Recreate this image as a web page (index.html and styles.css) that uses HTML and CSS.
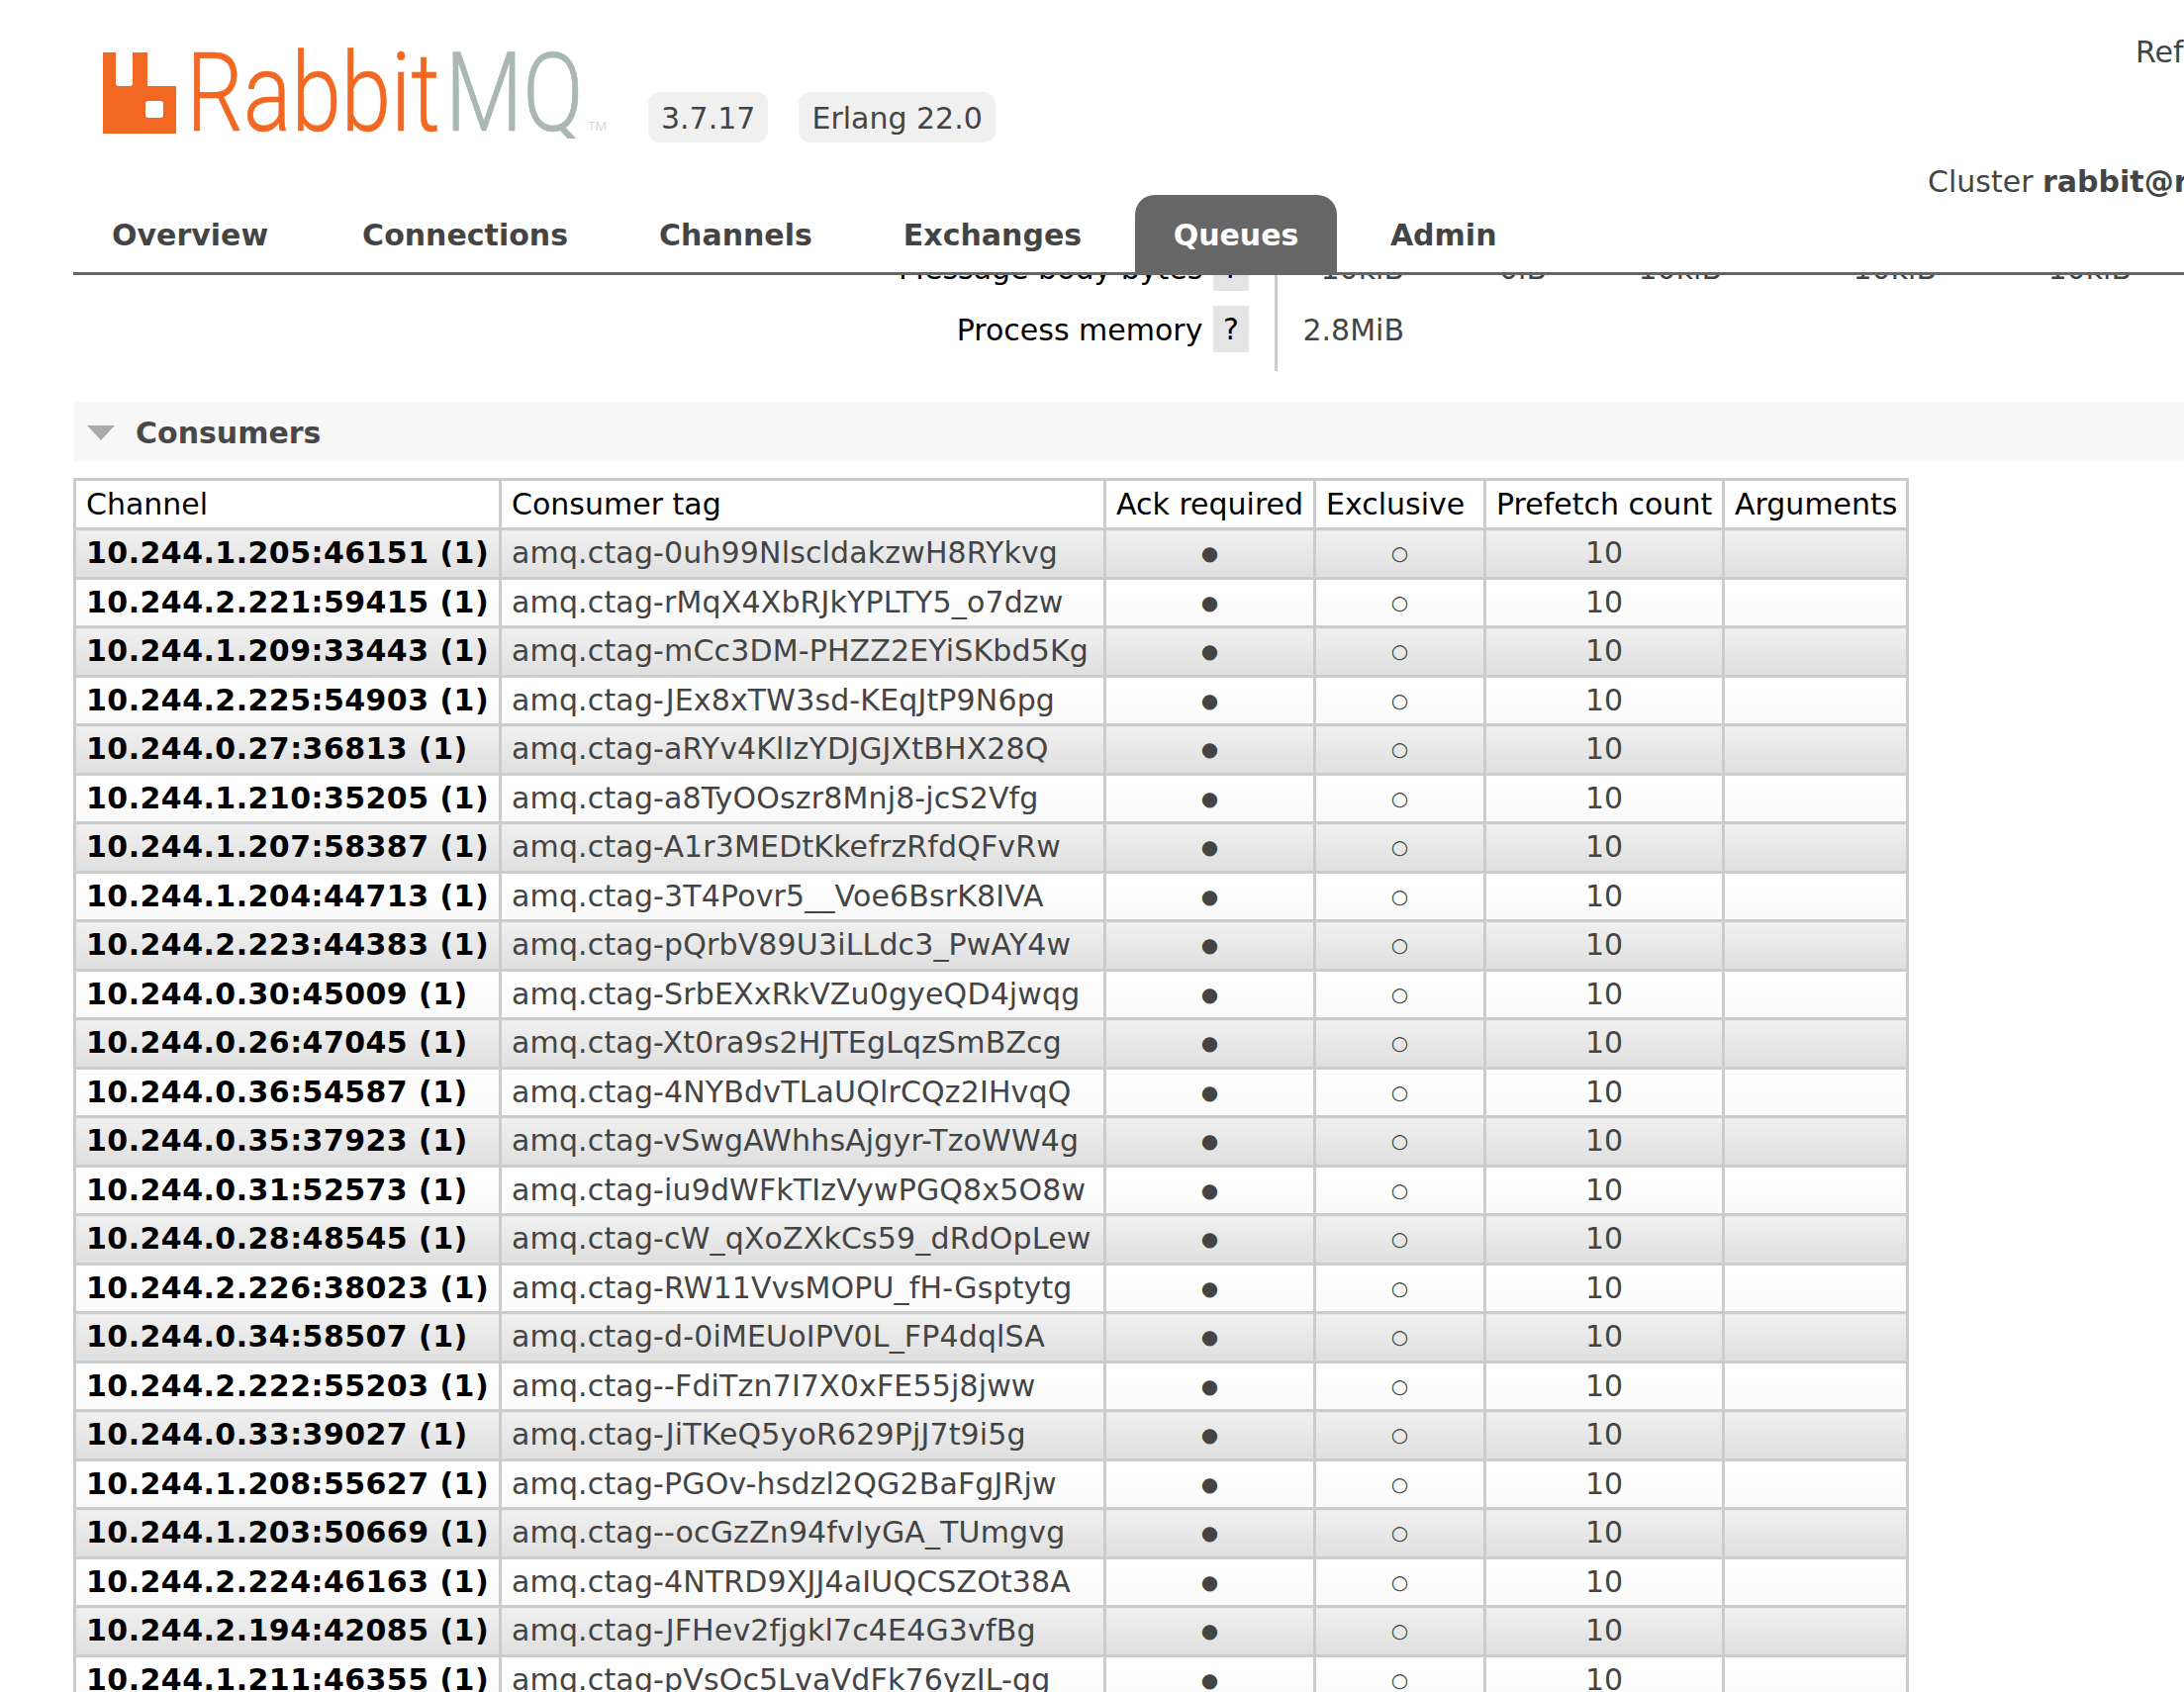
FILE: index.html
```html
<!DOCTYPE html>
<html lang="en">
<head>
    <meta charset="UTF-8">
    <meta name="viewport" content="width=device-width, initial-scale=1.0">
    <title>RabbitMQ Management</title>
    <link rel="stylesheet" href="styles.css">
</head>
<body>
    <div class="header">
        <div class="brand">
            <svg class="logo" width="510" height="140" viewBox="0 -50 510 140" aria-label="RabbitMQ">
                <path class="logo-mark" d="M0 3H13V34Q13 37 16 37H27Q30 37 30 34V3H45V37H74V85H0ZM46 52Q43 52 43 55V66Q43 69 46 69H58Q61 69 61 66V55Q61 52 58 52Z" fill-rule="evenodd"/>
                <text class="logo-orange" transform="scale(.81 1)" x="104" y="82">Rabbit</text>
                <text class="logo-grey" transform="scale(.81 1)" x="427" y="82">MQ</text>
                <text class="logo-tm" x="490" y="82">TM</text>
            </svg>
            <span class="badge">3.7.17</span>
            <span class="badge">Erlang 22.0</span>
        </div>
        <p class="refresh">Ref</p>
        <p class="cluster">Cluster <b>rabbit@r</b></p>
        <ul class="tabs">
            <li class="tab tab-overview">Overview</li>
            <li class="tab tab-connections">Connections</li>
            <li class="tab tab-channels">Channels</li>
            <li class="tab tab-exchanges">Exchanges</li>
            <li class="tab selected">Queues</li>
            <li class="tab tab-admin">Admin</li>
        </ul>
    </div>

    <div class="main">
        <div class="stats">
            <div class="stat-row">
                <div class="stat-name">Message body bytes <span class="help">?</span></div>
                <div class="stat-values">
                    <span>10kiB</span>
                    <span>0iB</span>
                    <span>10kiB</span>
                    <span>10kiB</span>
                    <span>10kiB</span>
                </div>
            </div>
            <div class="stat-row">
                <div class="stat-name">Process memory <span class="help">?</span></div>
                <div class="stat-values">
                    <span>2.8MiB</span>
                </div>
            </div>
        </div>

        <h2 class="section-title"><span class="arrow"></span>Consumers</h2>

        <table class="list">
            <colgroup>
                <col class="col-channel">
                <col class="col-tag">
                <col class="col-ack">
                <col class="col-excl">
                <col class="col-prefetch">
                <col class="col-args">
            </colgroup>
            <thead>
                <tr>
                    <th>Channel</th>
                    <th>Consumer tag</th>
                    <th>Ack required</th>
                    <th>Exclusive</th>
                    <th>Prefetch count</th>
                    <th>Arguments</th>
                </tr>
            </thead>
            <tbody>
                <tr class="alt1"><td class="channel">10.244.1.205:46151 (1)</td><td class="tag">amq.ctag-0uh99NlscldakzwH8RYkvg</td><td class="c"><span class="yes">●</span></td><td class="c"><span class="no">○</span></td><td class="c">10</td><td></td></tr>
                <tr class="alt2"><td class="channel">10.244.2.221:59415 (1)</td><td class="tag">amq.ctag-rMqX4XbRJkYPLTY5_o7dzw</td><td class="c"><span class="yes">●</span></td><td class="c"><span class="no">○</span></td><td class="c">10</td><td></td></tr>
                <tr class="alt1"><td class="channel">10.244.1.209:33443 (1)</td><td class="tag">amq.ctag-mCc3DM-PHZZ2EYiSKbd5Kg</td><td class="c"><span class="yes">●</span></td><td class="c"><span class="no">○</span></td><td class="c">10</td><td></td></tr>
                <tr class="alt2"><td class="channel">10.244.2.225:54903 (1)</td><td class="tag">amq.ctag-JEx8xTW3sd-KEqJtP9N6pg</td><td class="c"><span class="yes">●</span></td><td class="c"><span class="no">○</span></td><td class="c">10</td><td></td></tr>
                <tr class="alt1"><td class="channel">10.244.0.27:36813 (1)</td><td class="tag">amq.ctag-aRYv4KlIzYDJGJXtBHX28Q</td><td class="c"><span class="yes">●</span></td><td class="c"><span class="no">○</span></td><td class="c">10</td><td></td></tr>
                <tr class="alt2"><td class="channel">10.244.1.210:35205 (1)</td><td class="tag">amq.ctag-a8TyOOszr8Mnj8-jcS2Vfg</td><td class="c"><span class="yes">●</span></td><td class="c"><span class="no">○</span></td><td class="c">10</td><td></td></tr>
                <tr class="alt1"><td class="channel">10.244.1.207:58387 (1)</td><td class="tag">amq.ctag-A1r3MEDtKkefrzRfdQFvRw</td><td class="c"><span class="yes">●</span></td><td class="c"><span class="no">○</span></td><td class="c">10</td><td></td></tr>
                <tr class="alt2"><td class="channel">10.244.1.204:44713 (1)</td><td class="tag">amq.ctag-3T4Povr5__Voe6BsrK8IVA</td><td class="c"><span class="yes">●</span></td><td class="c"><span class="no">○</span></td><td class="c">10</td><td></td></tr>
                <tr class="alt1"><td class="channel">10.244.2.223:44383 (1)</td><td class="tag">amq.ctag-pQrbV89U3iLLdc3_PwAY4w</td><td class="c"><span class="yes">●</span></td><td class="c"><span class="no">○</span></td><td class="c">10</td><td></td></tr>
                <tr class="alt2"><td class="channel">10.244.0.30:45009 (1)</td><td class="tag">amq.ctag-SrbEXxRkVZu0gyeQD4jwqg</td><td class="c"><span class="yes">●</span></td><td class="c"><span class="no">○</span></td><td class="c">10</td><td></td></tr>
                <tr class="alt1"><td class="channel">10.244.0.26:47045 (1)</td><td class="tag">amq.ctag-Xt0ra9s2HJTEgLqzSmBZcg</td><td class="c"><span class="yes">●</span></td><td class="c"><span class="no">○</span></td><td class="c">10</td><td></td></tr>
                <tr class="alt2"><td class="channel">10.244.0.36:54587 (1)</td><td class="tag">amq.ctag-4NYBdvTLaUQlrCQz2IHvqQ</td><td class="c"><span class="yes">●</span></td><td class="c"><span class="no">○</span></td><td class="c">10</td><td></td></tr>
                <tr class="alt1"><td class="channel">10.244.0.35:37923 (1)</td><td class="tag">amq.ctag-vSwgAWhhsAjgyr-TzoWW4g</td><td class="c"><span class="yes">●</span></td><td class="c"><span class="no">○</span></td><td class="c">10</td><td></td></tr>
                <tr class="alt2"><td class="channel">10.244.0.31:52573 (1)</td><td class="tag">amq.ctag-iu9dWFkTIzVywPGQ8x5O8w</td><td class="c"><span class="yes">●</span></td><td class="c"><span class="no">○</span></td><td class="c">10</td><td></td></tr>
                <tr class="alt1"><td class="channel">10.244.0.28:48545 (1)</td><td class="tag">amq.ctag-cW_qXoZXkCs59_dRdOpLew</td><td class="c"><span class="yes">●</span></td><td class="c"><span class="no">○</span></td><td class="c">10</td><td></td></tr>
                <tr class="alt2"><td class="channel">10.244.2.226:38023 (1)</td><td class="tag">amq.ctag-RW11VvsMOPU_fH-Gsptytg</td><td class="c"><span class="yes">●</span></td><td class="c"><span class="no">○</span></td><td class="c">10</td><td></td></tr>
                <tr class="alt1"><td class="channel">10.244.0.34:58507 (1)</td><td class="tag">amq.ctag-d-0iMEUoIPV0L_FP4dqlSA</td><td class="c"><span class="yes">●</span></td><td class="c"><span class="no">○</span></td><td class="c">10</td><td></td></tr>
                <tr class="alt2"><td class="channel">10.244.2.222:55203 (1)</td><td class="tag">amq.ctag--FdiTzn7I7X0xFE55j8jww</td><td class="c"><span class="yes">●</span></td><td class="c"><span class="no">○</span></td><td class="c">10</td><td></td></tr>
                <tr class="alt1"><td class="channel">10.244.0.33:39027 (1)</td><td class="tag">amq.ctag-JiTKeQ5yoR629PjJ7t9i5g</td><td class="c"><span class="yes">●</span></td><td class="c"><span class="no">○</span></td><td class="c">10</td><td></td></tr>
                <tr class="alt2"><td class="channel">10.244.1.208:55627 (1)</td><td class="tag">amq.ctag-PGOv-hsdzl2QG2BaFgJRjw</td><td class="c"><span class="yes">●</span></td><td class="c"><span class="no">○</span></td><td class="c">10</td><td></td></tr>
                <tr class="alt1"><td class="channel">10.244.1.203:50669 (1)</td><td class="tag">amq.ctag--ocGzZn94fvIyGA_TUmgvg</td><td class="c"><span class="yes">●</span></td><td class="c"><span class="no">○</span></td><td class="c">10</td><td></td></tr>
                <tr class="alt2"><td class="channel">10.244.2.224:46163 (1)</td><td class="tag">amq.ctag-4NTRD9XJJ4aIUQCSZOt38A</td><td class="c"><span class="yes">●</span></td><td class="c"><span class="no">○</span></td><td class="c">10</td><td></td></tr>
                <tr class="alt1"><td class="channel">10.244.2.194:42085 (1)</td><td class="tag">amq.ctag-JFHev2fjgkl7c4E4G3vfBg</td><td class="c"><span class="yes">●</span></td><td class="c"><span class="no">○</span></td><td class="c">10</td><td></td></tr>
                <tr class="alt2"><td class="channel">10.244.1.211:46355 (1)</td><td class="tag">amq.ctag-pVsOc5LvaVdFk76yzIL-gg</td><td class="c"><span class="yes">●</span></td><td class="c"><span class="no">○</span></td><td class="c">10</td><td></td></tr>
            </tbody>
        </table>
    </div>
</body>
</html>
```

FILE: styles.css
```css
html, body {
    margin: 0;
    padding: 0;
    height: 1710px;
    overflow: hidden;
    background: #fff;
}

body {
    font-family: "DejaVu Sans", Verdana, sans-serif;
    font-size: 30px;
    color: #444;
}

/* header stays on top of the scrolled content */
.header {
    position: relative;
    z-index: 2;
    height: 275px;
    margin-left: 74px;
    background: #fff;
    border-bottom: 3px solid #666;
}

.brand {
    display: flex;
    align-items: flex-start;
    padding-left: 30px;
}

.logo {
    flex: none;
    margin-right: 41px;
}

.logo-mark {
    fill: #f26822;
}

.logo text {
    font-family: Roboto, sans-serif;
    font-weight: 300;
    font-size: 112px;
    stroke-width: 0.7px;
}

.logo .logo-orange {
    fill: #f26822;
    stroke: #f26822;
}

.logo .logo-grey {
    fill: #a9b8b1;
    stroke: #a9b8b1;
}

.logo .logo-tm {
    font-size: 13px;
    fill: #c5cfca;
    stroke: none;
}

.badge {
    margin-top: 93px;
    margin-right: 31px;
    padding: 0 13px;
    height: 51px;
    line-height: 53px;
    background: #f0f0f0;
    border-radius: 12px;
}

.refresh,
.cluster {
    position: absolute;
    margin: 0;
    white-space: nowrap;
}

.refresh {
    top: 35px;
    left: 2084px;
}

.cluster {
    top: 166px;
    left: 1874px;
}

.tabs {
    position: absolute;
    left: 0;
    bottom: -3px;
    display: flex;
    margin: 0;
    padding: 0;
    list-style: none;
    font-weight: bold;
}

.tab {
    height: 81px;
    line-height: 82px;
    white-space: nowrap;
}

.tab-overview { margin-left: 39px; }
.tab-connections { margin-left: 95px; }
.tab-channels { margin-left: 92px; }
.tab-exchanges { margin-left: 92px; }
.tab-admin { margin-left: 54px; }

.tab.selected {
    margin-left: 54px;
    padding: 0 38.5px;
    background: #666;
    color: #fff;
    border-radius: 20px 20px 0 0;
}

/* main content, pulled up under the header */
.main {
    margin-top: -38px;
    margin-left: 74px;
}

.stats {
    height: 166px;
}

.stat-row {
    display: flex;
    height: 62px;
}

.stat-name {
    flex: none;
    width: 1188px;
    height: 62px;
    color: #000;
    text-align: right;
    line-height: 64px;
    padding-right: 26px;
}

.help {
    display: inline-block;
    width: 36px;
    height: 47px;
    margin-left: 1px;
    line-height: 47px;
    background: #e4e4e4;
    text-align: center;
    vertical-align: 1px;
}

.stat-values {
    display: grid;
    grid-template-columns: 128px 144px 177px 217px 197px;
    flex: none;
    height: 62px;
    border-left: 3px solid #ccc;
    line-height: 64px;
    text-align: right;
}

.stat-row:last-child .stat-values {
    height: 73px;
}

.section-title {
    display: flex;
    align-items: center;
    box-sizing: border-box;
    height: 61px;
    margin: 0 0 16px;
    padding-top: 2px;
    background: #f8f8f8;
    color: #484848;
    font-size: 30px;
    font-weight: bold;
}

.arrow {
    width: 0;
    height: 0;
    margin: 0 21px 0 14px;
    border-left: 14px solid transparent;
    border-right: 14px solid transparent;
    border-top: 15px solid #aaa;
}

table.list {
    table-layout: fixed;
    width: 1854px;
    border-collapse: collapse;
    border: 3px solid #ccc;
}

.col-channel { width: 430px; }
.col-tag { width: 611px; }
.col-ack { width: 212px; }
.col-excl { width: 172px; }
.col-prefetch { width: 241px; }
.col-args { width: 186px; }

table.list th,
table.list td {
    height: 46.5px;
    padding: 0 10px;
    border: 3px solid #ccc;
    text-align: left;
    white-space: nowrap;
    line-height: 46px;
}

table.list th {
    height: 45.5px;
    padding-top: 1px;
    font-weight: normal;
    color: #000;
    background: #fff;
}

table.list td.channel {
    font-weight: bold;
    color: #000;
    letter-spacing: 0.45px;
}

table.list td.tag {
    letter-spacing: 0.15px;
}

table.list td.c {
    text-align: center;
}

.alt1 td {
    background: linear-gradient(#f0f0f0, #dfdfdf);
}

.alt2 td {
    background: linear-gradient(#fff, #fafafa);
}

.yes,
.no {
    font-size: 20px;
    line-height: 0;
    vertical-align: 3px;
}
```
